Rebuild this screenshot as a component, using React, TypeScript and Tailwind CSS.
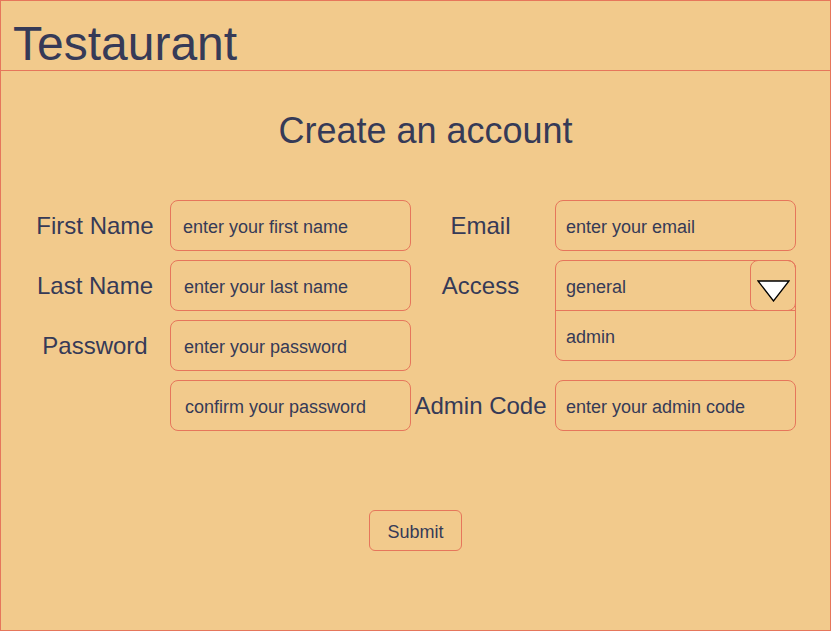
import React from 'react';

const fieldClass =
  'h-[51px] w-[241px] rounded-lg border border-[#e6765b] bg-transparent pt-[4px] text-[18px] text-[#363a57] outline-none placeholder:text-[#363a57] placeholder:opacity-100';

const Label = ({ children }: { children: React.ReactNode }) => (
  <div className="flex h-[51px] items-center justify-center text-[24px] leading-none">{children}</div>
);

export default function App() {
  return (
    <div className="h-[631px] w-[831px] border border-[#e6765b] bg-[#f2ca8c] font-['Liberation_Sans',Arial,sans-serif] text-[#363a57]">
      {/* Header */}
      <header className="h-[70px] border-b border-[#e6765b] pl-[12px] pt-[19px]">
        <h1 className="text-[48px] leading-none">Testaurant</h1>
      </header>

      <h2 className="mt-[42px] pl-[20px] text-center text-[36px] leading-none">Create an account</h2>

      <form className="mt-[51px] pl-[19px]" onSubmit={(e) => e.preventDefault()}>
        <div className="grid grid-cols-[150px_241px_144px_241px] grid-rows-[51px_51px_51px_51px] gap-y-[9px]">
          <Label>First Name</Label>
          <input className={`${fieldClass} pl-[12px]`} placeholder="enter your first name" />
          <div className="pr-[5px]">
            <Label>Email</Label>
          </div>
          <input className={`${fieldClass} pl-[10px]`} placeholder="enter your email" />

          <Label>Last Name</Label>
          <input className={`${fieldClass} pl-[13px]`} placeholder="enter your last name" />
          <div className="pr-[5px]">
            <Label>Access</Label>
          </div>
          {/* Access dropdown, open */}
          <div className="relative row-span-2 h-[101px] w-[241px] rounded-lg border border-[#e6765b] text-[18px]">
            <div className="flex h-[50px] items-center border-b border-[#e6765b] pl-[10px] pt-[3px]">general</div>
            <div className="flex h-[49px] items-center pl-[10px] pt-[3px]">admin</div>
            <button
              type="button"
              className="absolute right-[-1px] top-[-1px] flex h-[51px] w-[46px] justify-center rounded-lg border border-[#e6765b] pt-[19px]"
            >
              <svg width="33" height="22" viewBox="0 0 33 22">
                <polygon points="1,1 32,1 16.5,21" fill="#ffffff" stroke="#000000" strokeWidth="1.3" strokeLinejoin="miter" />
              </svg>
            </button>
          </div>

          <Label>Password</Label>
          <input type="password" className={`${fieldClass} pl-[13px]`} placeholder="enter your password" />
          <div />

          <div />
          <input type="password" className={`${fieldClass} pl-[14px]`} placeholder="confirm your password" />
          <div className="pr-[5px]">
            <Label>Admin Code</Label>
          </div>
          <input className={`${fieldClass} pl-[10px]`} placeholder="enter your admin code" />
        </div>

        <div className="mt-[79px] flex justify-center pr-[19px]">
          <button
            type="submit"
            className="h-[41px] w-[93px] rounded-md border border-[#e6765b] pt-[3px] text-[18px] leading-none"
          >
            Submit
          </button>
        </div>
      </form>
    </div>
  );
}
